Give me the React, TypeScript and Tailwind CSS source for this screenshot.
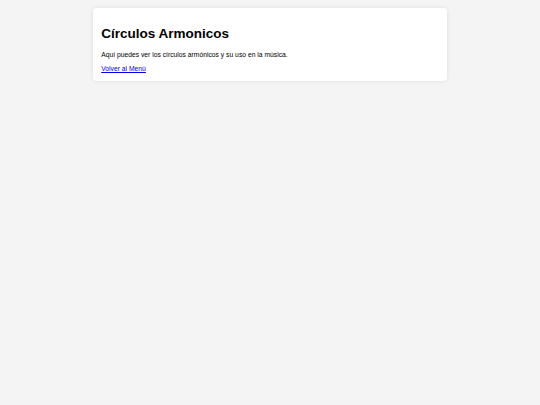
import React from "react";

export default function App() {
  return (
    <div className="min-h-screen w-full bg-[#f4f4f4] pt-[8.44px] font-['Liberation_Sans',Arial,sans-serif] text-black">
      <div className="mx-auto w-[354.5px] rounded-[3.4px] bg-white px-[8.44px] pt-[8.44px] pb-[9.6px] text-[6.75px] leading-[normal] shadow-[0_0_4.2px_rgba(0,0,0,0.1)]">
        <h1 className="mt-[9.05px] mb-[10px] text-[13.5px] font-bold leading-[normal]">
          Círculos Armonicos
        </h1>
        <p className="mb-[6.75px]">
          Aquí puedes ver los círculos armónicos y su uso en la música.
        </p>
        <a href="#" className="text-[#0000ee] underline">
          Volver al Menú
        </a>
      </div>
    </div>
  );
}
